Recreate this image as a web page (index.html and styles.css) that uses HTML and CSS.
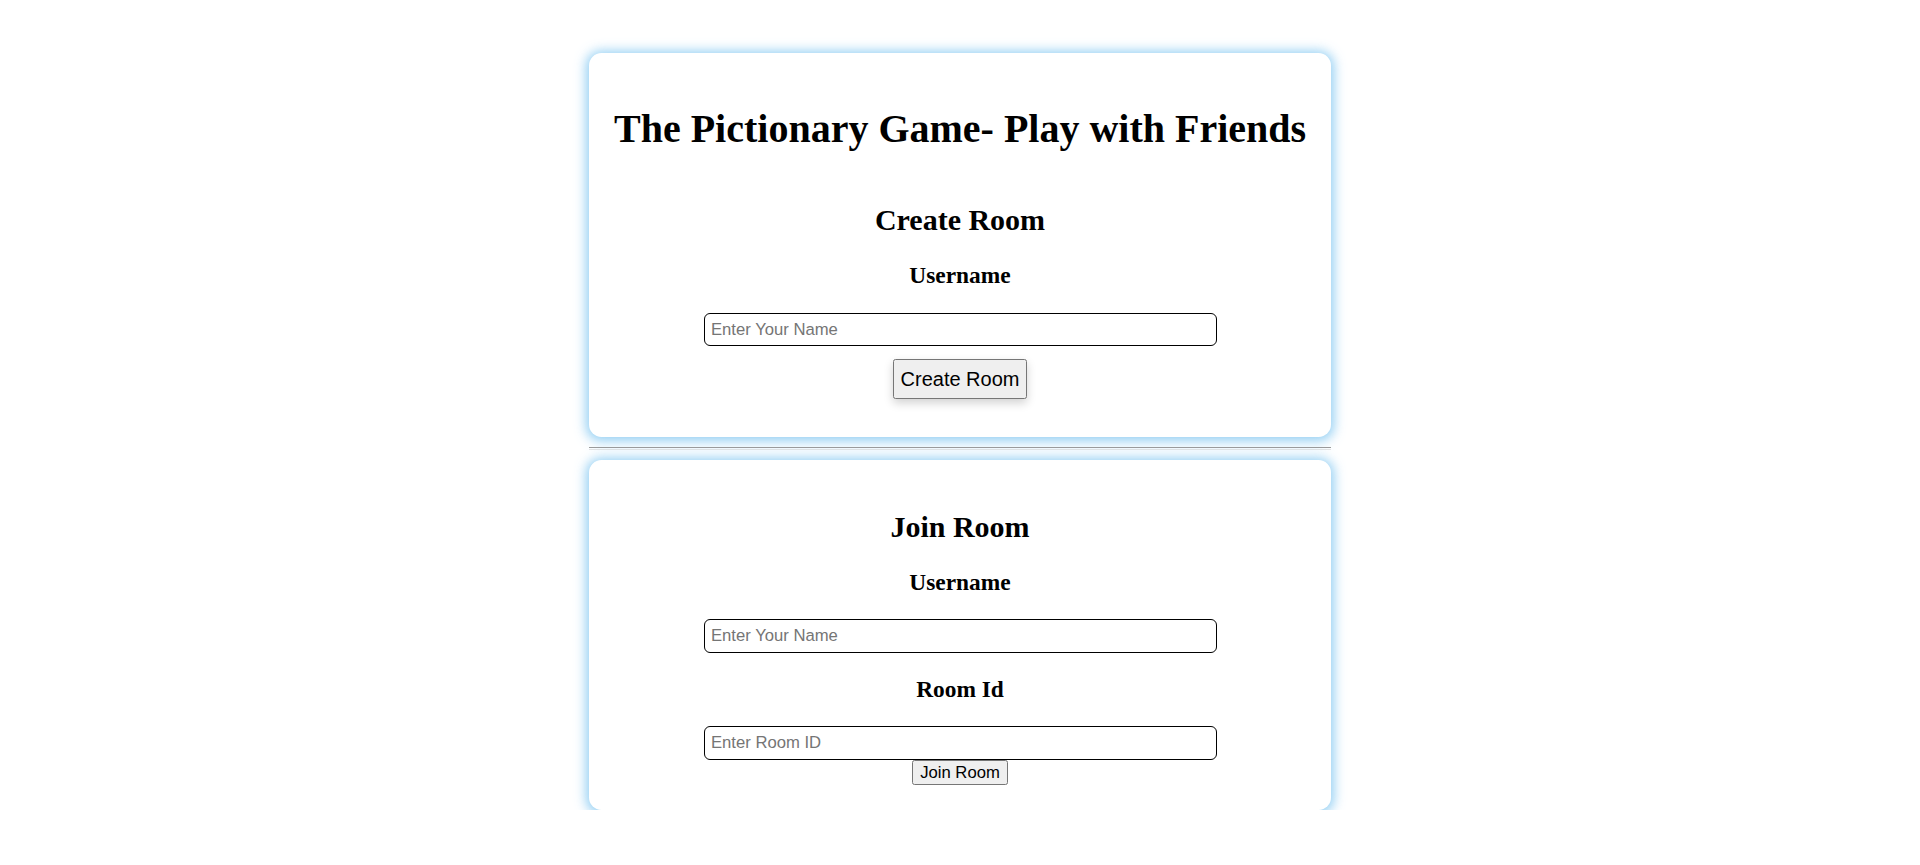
FILE: index.html
```html
<!DOCTYPE html>
<html lang="en">
<head>
<meta charset="utf-8">
<title>The Pictionary Game</title>
<link rel="stylesheet" href="styles.css">
</head>
<body>
<main class="page">
  <section class="card">
    <h1 class="title">The Pictionary Game- Play with Friends</h1>
    <h2 class="section-title section-title-spaced">Create Room</h2>
    <h3 class="label">Username</h3>
    <input class="field" type="text" placeholder="Enter Your Name">
    <button class="btn btn-create" type="button">Create Room</button>
  </section>
  <hr class="divider">
  <section class="card">
    <h2 class="section-title">Join Room</h2>
    <h3 class="label">Username</h3>
    <input class="field" type="text" placeholder="Enter Your Name">
    <h3 class="label">Room Id</h3>
    <input class="field" type="text" placeholder="Enter Room ID">
    <button class="btn btn-join" type="button">Join Room</button>
  </section>
</main>
</body>
</html>
```

FILE: styles.css
```css
html, body {
  margin: 0;
  padding: 0;
  background: #ffffff;
}

.page {
  padding-top: 53px;
  font-family: "Liberation Serif", "Times New Roman", serif;
  color: #000;
}

.card {
  box-sizing: border-box;
  width: 742px;
  margin: 0 auto;
  padding: 25px 25px;
  background: #ffffff;
  border-radius: 12.5px;
  box-shadow: 0 1px 12px 3px rgba(120, 195, 240, 0.8);
  text-align: center;
}

.title {
  font-size: 40px;
  font-weight: bold;
  line-height: normal;
  margin: 26.8px 0;
  white-space: nowrap;
}

.section-title {
  font-size: 30px;
  font-weight: bold;
  line-height: normal;
  margin: 24.9px 0;
}

.section-title-spaced {
  margin-top: 51.7px;
}

.label {
  font-size: 23.4px;
  font-weight: bold;
  line-height: normal;
  margin: 23.4px 0;
}

.field {
  display: block;
  box-sizing: border-box;
  width: 513px;
  height: 33.5px;
  margin: 0 auto;
  padding: 0 6.5px;
  border: 1.4px solid #000;
  border-radius: 6px;
  background: #fff;
  font-family: "Liberation Sans", Arial, sans-serif;
  font-size: 16.67px;
  color: #000;
  outline: none;
}

.field::placeholder {
  color: #757575;
}

.btn {
  display: block;
  margin: 0 auto;
  padding: 1.25px 7.5px;
  background: #efefef;
  border: 1.25px solid #767676;
  border-radius: 2.5px;
  font-family: "Liberation Sans", Arial, sans-serif;
  color: #000;
  line-height: normal;
  cursor: pointer;
}

.btn-create {
  font-size: 20px;
  padding: 7.5px 6.25px;
  margin: 13px auto 13.2px;
  box-shadow: 0 4px 10px rgba(0, 0, 0, 0.18);
}

.btn-join {
  font-size: 16.67px;
  height: 25.5px;
  padding-top: 0;
  padding-bottom: 0;
}

.divider {
  box-sizing: border-box;
  width: 742px;
  height: 2.5px;
  margin: 10px auto;
  border: none;
  border-top: 1.25px solid #9a9a9a;
  border-bottom: 1.25px solid #e4e4e4;
}
```
